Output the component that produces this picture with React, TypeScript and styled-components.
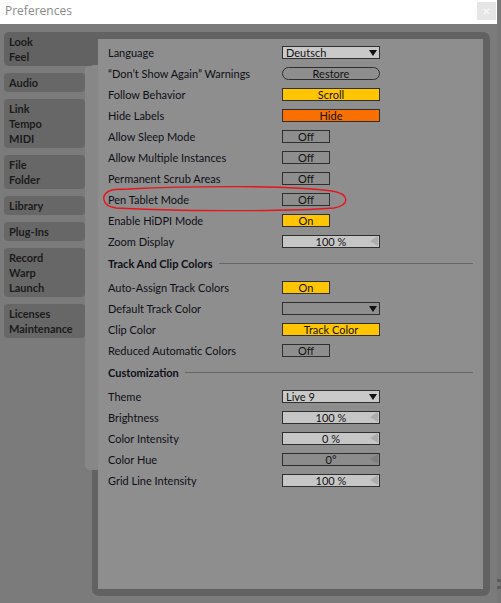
import React, { FC } from 'react';
import styled, { createGlobalStyle } from 'styled-components';

const GlobalStyle = createGlobalStyle`
  html, body {
    margin:0;
    padding:0;
    background:#7b7b7b;
  }
  body {
    font-family:Lato, "Noto Sans", sans-serif;
  }
`;

const colors = {
  outer: '#7b7b7b',
  frame: '#626262',
  tab: '#676767',
  strip: '#878787',
  content: '#8e8e8e',
  text: '#0e0e18',
  border: '#2f2f2f',
  yellow: '#ffc500',
  orange: '#f97000',
  light: '#c6c6c6',
  rule: '#656565',
};

const Screen = styled.div`
  position:relative;
  width:501px;
  height:603px;
  display:flex;
  overflow:hidden;
  background:${colors.outer};
`;

const Window = styled.div`
  width:497px;
  display:flex;
  flex-direction:column;
`;

const Edge = styled.div`
  width:4px;
  background:#777;
  display:flex;
  flex-direction:column;
  justify-content:flex-end;
  gap:4px;
  padding-bottom:14px;
  box-sizing:border-box;
  .mark {
    height:3px;
    background:#5c5c5c;
  }
`;

const TitleBar = styled.div`
  height:24px;
  background:#fff;
  display:flex;
  align-items:center;
  justify-content:space-between;
  padding:0 1px 0 5px;
  box-sizing:border-box;
  .title {
    font-family:"Open Sans", "Noto Sans", sans-serif;
    font-size:12px;
    color:#8a8a8a;
    margin-top:-4px;
  }
`;

const CloseButton = styled.div`
  width:19px;
  height:18px;
  margin-top:-2px;
  background:#e6e6e6;
  color:#fafafa;
  font-family:"DejaVu Sans", sans-serif;
  font-size:10px;
  display:flex;
  align-items:center;
  justify-content:center;
`;

const Body = styled.div`
  position:relative;
  flex:1;
  display:flex;
  padding:8px 7px 7px 4px;
  box-sizing:border-box;
`;

const Sidebar = styled.nav`
  width:81px;
  display:flex;
  flex-direction:column;
  gap:7px;
  position:relative;
  z-index:1;
`;

const Tab = styled.div<{ $active?: boolean }>`
  background:${p => (p.$active ? colors.frame : colors.tab)};
  border-radius:${p => (p.$active ? '5px 0 0 5px' : '4px')};
  margin-right:${p => (p.$active ? '-7px' : '0')};
  padding:2px 0 2px 5px;
  font-size:11px;
  font-weight:700;
  line-height:15px;
  color:#1b1b1b;
  .line {
    display:block;
  }
`;

const Strip = styled.div`
  position:absolute;
  left:85px;
  top:41px;
  width:13px;
  height:405px;
  background:${colors.strip};
  border-radius:5px 0 0 5px;
`;

const Frame = styled.section`
  flex:1;
  margin-left:7px;
  background:${colors.frame};
  border-radius:0 7px 7px 7px;
  padding:7px 7px 7px 6px;
  display:flex;
`;

const Content = styled.div`
  flex:1;
  background:${colors.content};
  padding:3px 10px 0 10px;
  position:relative;
  z-index:2;
`;

const Row = styled.div`
  height:21px;
  display:grid;
  grid-template-columns:174px auto;
  align-items:center;
  .label {
    font-size:11px;
    color:${colors.text};
    white-space:nowrap;
  }
`;

const SectionHead = styled.div`
  height:23px;
  margin-bottom:2px;
  display:flex;
  align-items:center;
  gap:6px;
  .name {
    font-size:11px;
    font-weight:700;
    color:${colors.text};
    white-space:nowrap;
  }
  .rule {
    flex:1;
    height:1px;
    background:${colors.rule};
  }
`;

const Control = styled.div<{ $wide?: boolean; $bg?: string; $pill?: boolean }>`
  position:relative;
  width:${p => (p.$wide ? '98px' : '48px')};
  height:13px;
  box-sizing:border-box;
  border:1px solid ${colors.border};
  border-radius:${p => (p.$pill ? '7px' : '0')};
  background:${p => p.$bg || colors.content};
  font-size:11px;
  line-height:11px;
  color:#111;
  display:flex;
  align-items:center;
  justify-content:center;
`;

const DropBox = styled(Control)`
  justify-content:space-between;
  padding:0 2px 0 3px;
`;

const SliderBox = styled(Control)<{ $notch: string }>`
  &::after {
    content:'';
    position:absolute;
    right:1px;
    top:0;
    border-top:5.5px solid transparent;
    border-bottom:5.5px solid transparent;
    border-right:8px solid ${p => p.$notch};
  }
`;

type Ctl =
  | { kind: 'drop'; text: string; bg: string }
  | { kind: 'pill'; text: string }
  | { kind: 'toggle'; text: string; bg?: string; wide?: boolean }
  | { kind: 'slider'; text: string; dark?: boolean };

interface ISetting {
  label: string;
  ctl: Ctl;
}

const general: ISetting[] = [
  { label: 'Language', ctl: { kind: 'drop', text: 'Deutsch', bg: '#c9c9c9' } },
  { label: '“Don’t Show Again” Warnings', ctl: { kind: 'pill', text: 'Restore' } },
  { label: 'Follow Behavior', ctl: { kind: 'toggle', text: 'Scroll', bg: colors.yellow, wide: true } },
  { label: 'Hide Labels', ctl: { kind: 'toggle', text: 'Hide', bg: colors.orange, wide: true } },
  { label: 'Allow Sleep Mode', ctl: { kind: 'toggle', text: 'Off' } },
  { label: 'Allow Multiple Instances', ctl: { kind: 'toggle', text: 'Off' } },
  { label: 'Permanent Scrub Areas', ctl: { kind: 'toggle', text: 'Off' } },
  { label: 'Pen Tablet Mode', ctl: { kind: 'toggle', text: 'Off' } },
  { label: 'Enable HiDPI Mode', ctl: { kind: 'toggle', text: 'On', bg: colors.yellow } },
  { label: 'Zoom Display', ctl: { kind: 'slider', text: '100 %' } },
];

const trackColors: ISetting[] = [
  { label: 'Auto-Assign Track Colors', ctl: { kind: 'toggle', text: 'On', bg: colors.yellow } },
  { label: 'Default Track Color', ctl: { kind: 'drop', text: '', bg: colors.content } },
  { label: 'Clip Color', ctl: { kind: 'toggle', text: 'Track Color', bg: colors.yellow, wide: true } },
  { label: 'Reduced Automatic Colors', ctl: { kind: 'toggle', text: 'Off' } },
];

const customization: ISetting[] = [
  { label: 'Theme', ctl: { kind: 'drop', text: 'Live 9', bg: '#c9c9c9' } },
  { label: 'Brightness', ctl: { kind: 'slider', text: '100 %' } },
  { label: 'Color Intensity', ctl: { kind: 'slider', text: '0 %' } },
  { label: 'Color Hue', ctl: { kind: 'slider', text: '0°', dark: true } },
  { label: 'Grid Line Intensity', ctl: { kind: 'slider', text: '100 %' } },
];

const tabs = [
  ['Look', 'Feel'],
  ['Audio'],
  ['Link', 'Tempo', 'MIDI'],
  ['File', 'Folder'],
  ['Library'],
  ['Plug-Ins'],
  ['Record', 'Warp', 'Launch'],
  ['Licenses', 'Maintenance'],
];

const SettingControl: FC<{ ctl: Ctl }> = ({ ctl }) => {
  switch (ctl.kind) {
    case 'drop':
      return (
        <DropBox $wide $bg={ctl.bg}>
          <span>{ctl.text}</span>
          <svg width="8" height="6" viewBox="0 0 8 6">
            <path d="M0 0 H8 L4 6 Z" fill="#111" />
          </svg>
        </DropBox>
      );
    case 'pill':
      return <Control $wide $pill>{ctl.text}</Control>;
    case 'slider':
      return (
        <SliderBox
          $wide
          $bg={ctl.dark ? '#8c8c8c' : colors.light}
          $notch={ctl.dark ? '#7e7e7e' : '#acacac'}
        >
          {ctl.text}
        </SliderBox>
      );
    default:
      return <Control $wide={ctl.wide} $bg={ctl.bg}>{ctl.text}</Control>;
  }
};

const SettingRows: FC<{ items: ISetting[] }> = ({ items }) => (
  <>
    {items.map(item => (
      <Row key={item.label}>
        <span className='label'>{item.label}</span>
        <SettingControl ctl={item.ctl} />
      </Row>
    ))}
  </>
);

const Annotation = styled.svg`
  position:absolute;
  left:0;
  top:0;
  pointer-events:none;
  z-index:5;
`;

const App: FC = () => (
  <>
    <GlobalStyle />
    <Screen>
      <Window>
        <TitleBar>
          <span className='title'>Preferences</span>
          <CloseButton>✕</CloseButton>
        </TitleBar>
        <Body>
          <Sidebar>
            {tabs.map((lines, i) => (
              <Tab key={lines.join('-')} $active={i === 0}>
                {lines.map(line => (
                  <span key={line} className='line'>{line}</span>
                ))}
              </Tab>
            ))}
          </Sidebar>
          <Strip />
          <Frame>
            <Content>
              <SettingRows items={general} />
              <SectionHead>
                <span className='name'>Track And Clip Colors</span>
                <span className='rule' />
              </SectionHead>
              <SettingRows items={trackColors} />
              <SectionHead>
                <span className='name'>Customization</span>
                <span className='rule' />
              </SectionHead>
              <SettingRows items={customization} />
            </Content>
          </Frame>
        </Body>
      </Window>
      <Edge>
        <span className='mark' />
        <span className='mark' />
      </Edge>
      <Annotation width="501" height="603" viewBox="0 0 501 603">
        <path
          d="M128 189 C190 186 290 185 332 191 C350 194 350 205 334 208 C280 212 170 211 116 208 C101 206 100 193 112 190 C118 189 124 189 132 189"
          fill="none"
          stroke="#e8141b"
          strokeWidth="1.4"
          strokeLinecap="round"
        />
      </Annotation>
    </Screen>
  </>
);

export default App;
